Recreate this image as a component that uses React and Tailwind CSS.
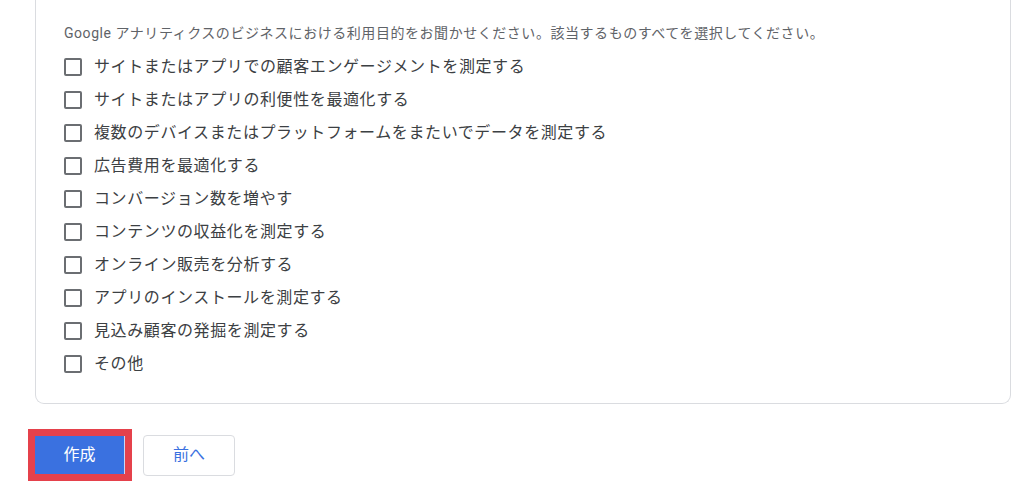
import React, { useState } from 'react';

const PURPOSES = [
  'サイトまたはアプリでの顧客エンゲージメントを測定する',
  'サイトまたはアプリの利便性を最適化する',
  '複数のデバイスまたはプラットフォームをまたいでデータを測定する',
  '広告費用を最適化する',
  'コンバージョン数を増やす',
  'コンテンツの収益化を測定する',
  'オンライン販売を分析する',
  'アプリのインストールを測定する',
  '見込み顧客の発掘を測定する',
  'その他',
];

function Checkbox({ checked, onChange, label }) {
  return (
    <label className="flex h-[33px] cursor-pointer items-center">
      <span
        onClick={onChange}
        className={`flex h-[18px] w-[18px] items-center justify-center rounded-[2px] border-2 ${
          checked ? 'border-[#1a73e8] bg-[#1a73e8]' : 'border-[#6b6e72] bg-white'
        }`}
      >
        {checked && (
          <svg viewBox="0 0 24 24" className="h-[14px] w-[14px] text-white" fill="none" stroke="currentColor" strokeWidth="3">
            <path d="M5 12l5 5 9-10" />
          </svg>
        )}
      </span>
      <span className="ml-[12px] text-[16px] tracking-[0.6px] text-[#3c4043]">{label}</span>
    </label>
  );
}

export default function App() {
  const [selected, setSelected] = useState([]);

  const toggle = (i) => {
    setSelected((s) => (s.includes(i) ? s.filter((x) => x !== i) : [...s, i]));
  };

  return (
    <div className="min-h-[486px] bg-white font-['Roboto','Noto_Sans_CJK_JP',sans-serif]">
      {/* card (top is scrolled out of view) */}
      <div className="ml-[35px] w-[976px] rounded-b-[9px] border border-t-0 border-[#dadce0] pb-[23px] pl-[28px] pt-[23px]">
        <p className="h-[20px] text-[14px] leading-[20px] tracking-[0.55px] text-[#5f6368]">
          Google アナリティクスのビジネスにおける利用目的をお聞かせください。該当するものすべてを選択してください。
        </p>
        <div className="mt-[7px] flex flex-col">
          {PURPOSES.map((p, i) => (
            <Checkbox key={p} label={p} checked={selected.includes(i)} onChange={() => toggle(i)} />
          ))}
        </div>
      </div>

      <div className="mt-[25px] flex items-center pl-[28px]">
        <div className="border-[7px] border-[#e5414b]">
          <button className="flex h-[38px] w-[90px] items-center justify-center border-r border-[#c9d7f5] bg-[#3a71e0] text-[16px] text-white">
            作成
          </button>
        </div>
        <button className="ml-[11px] flex h-[41px] w-[92px] items-center justify-center rounded-[4px] border border-[#dadce0] bg-white text-[16px] text-[#3a71e0]">
          前へ
        </button>
      </div>
    </div>
  );
}
